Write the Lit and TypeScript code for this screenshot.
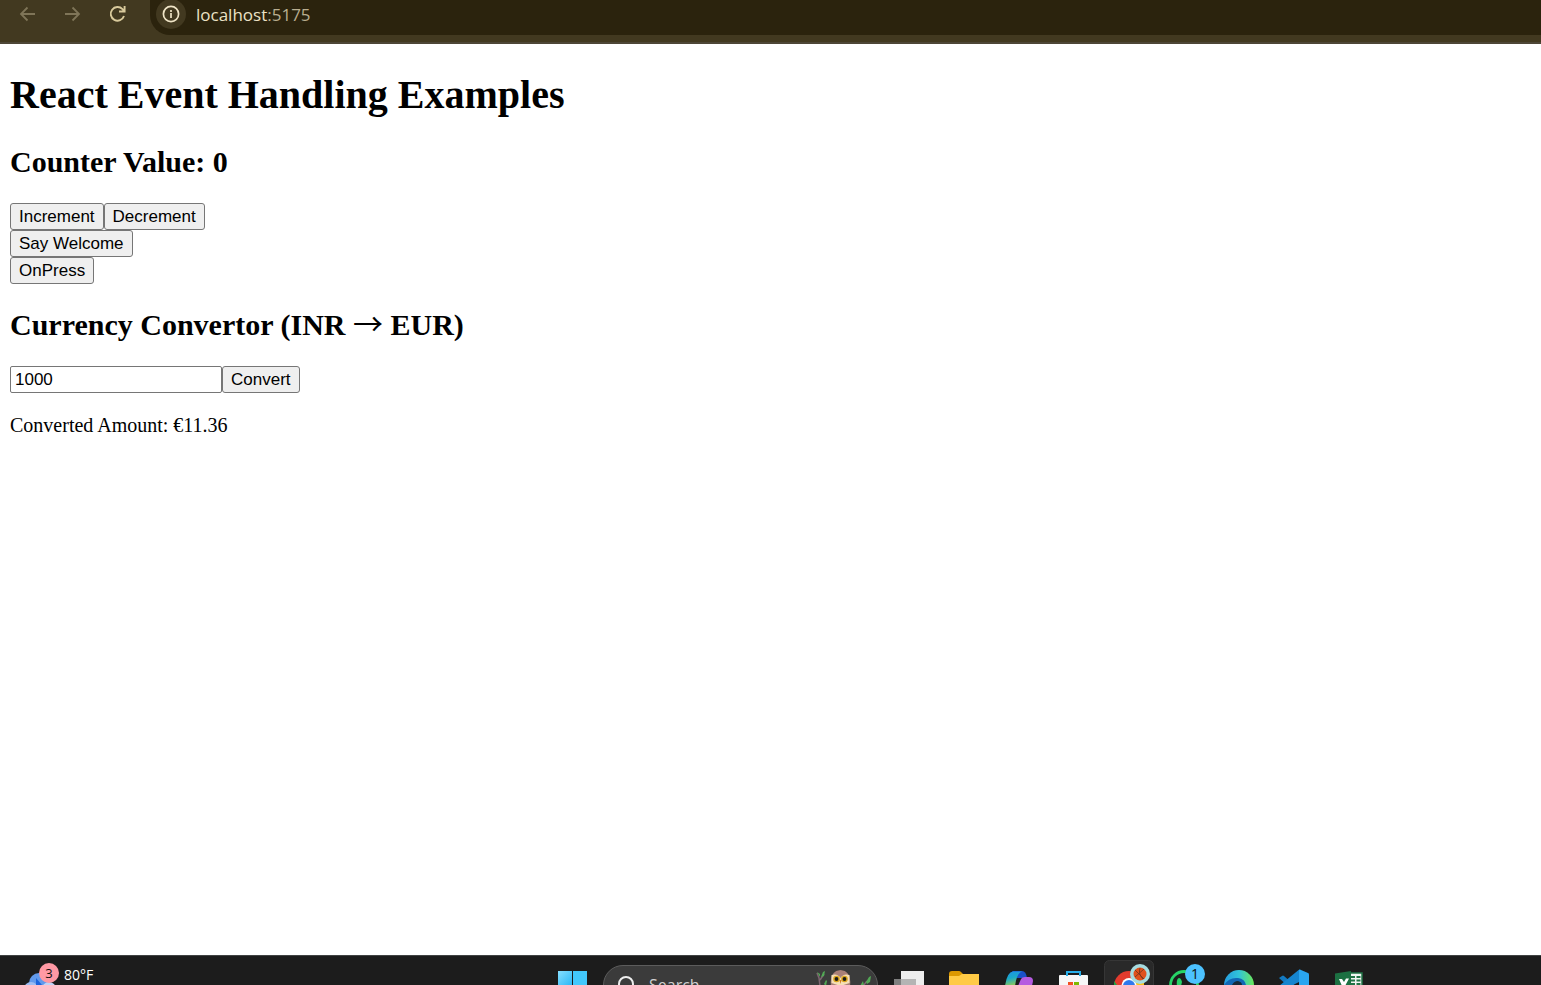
import { LitElement, html, css, svg } from "lit";
import { customElement, state } from "lit/decorators.js";

@customElement("browser-bar")
class BrowserBar extends LitElement {
  static styles = css`
    :host {
      display: flex;
      align-items: flex-start;
      box-sizing: border-box;
      height: 44px;
      background: #423920;
      border-bottom: 2px solid #4d4637;
      overflow: hidden;
    }
    .nav {
      display: flex;
      gap: 17px;
      padding-left: 14px;
    }
    .nav button {
      width: 28px;
      height: 28px;
      padding: 0;
      border: 0;
      background: none;
      color: #d9ca9c;
    }
    .nav button:disabled {
      color: #7f7558;
    }
    svg {
      display: block;
    }
    .address {
      flex: 1;
      display: flex;
      align-items: flex-start;
      gap: 10px;
      box-sizing: border-box;
      height: 35px;
      margin-left: 18px;
      padding-left: 6px;
      background: #2b230d;
      border-radius: 0 0 0 20px;
    }
    .info {
      padding: 0;
      border: 0;
      background: none;
      color: #efe4c6;
    }
    .url {
      font-family: "Open Sans", "Noto Sans", sans-serif;
      font-size: 17px;
      line-height: 29px;
      color: #ece2c5;
      text-decoration: none;
    }
    .port {
      color: #b9ae90;
    }
  `;
  render() {
    return html`
      <nav class="nav">
        <button disabled aria-label="Back">
          <svg width="28" height="28" fill="none" stroke="currentColor" stroke-width="1.8"><path d="M21 14H7M13.500 7.500L7 14l6.500 6.500" /></svg>
        </button>
        <button disabled aria-label="Forward">
          <svg width="28" height="28" fill="none" stroke="currentColor" stroke-width="1.8"><path d="M6 14h14M13.500 7.500L20 14l-6.500 6.500" /></svg>
        </button>
        <button aria-label="Reload">
          <svg width="28" height="28" fill="none" stroke="currentColor" stroke-width="1.9"><path d="M20 16a6.800 6.800 0 1 1-1.500-6.800L20.500 11.300M20.600 6v5.500H15" /></svg>
        </button>
      </nav>
      <div class="address">
        <button class="info" aria-label="Site information">
          <svg width="30" height="33" fill="none" stroke="currentColor" stroke-width="1.7"><circle cx="15" cy="14" r="15" fill="#423920" stroke="none" /><circle cx="15" cy="14" r="7.600" /><path d="M15 13v5M15 10v1.900" /></svg>
        </button>
        <a class="url" href="http://localhost:5175">localhost<span class="port">:5175</span></a>
      </div>
    `;
  }
}

const apps = [
  {
    name: "Task view",
    art: svg`<rect x="19" y="16" width="23" height="20" fill="#ededed"/><rect x="12" y="24" width="22" height="12" fill="#a0a0a0" fill-opacity=".75"/>`,
  },
  {
    name: "File Explorer",
    art: svg`<path d="M12 19q0-3 3-3h7q1 0 2 1l2 2h14q2 0 2 2v10H12z" fill="#dc9800"/><path d="M12 21h10l3-2h17v12H12z" fill="#ffca45"/>`,
  },
  {
    name: "Copilot",
    art: svg`<defs><linearGradient id="cop" x1="0" y1="0" x2=".3" y2="1"><stop offset="0" stop-color="#1f8fe8"/><stop offset=".5" stop-color="#1aa9c8"/><stop offset="1" stop-color="#8cc85a"/></linearGradient></defs>
      <path d="M20 16h10q4 0 5 7H25z" fill="#1951c9"/><path d="M13 31q2-14 8-14.500h9q-4 1-6 9l-1 5.500z" fill="url(#cop)"/><path d="M26 31l3-7q1-2 4-2h4q4 0 4 4l-1 5z" fill="#b55be0"/>`,
  },
  {
    name: "Microsoft Store",
    art: svg`<path d="M12 21q0-1 1-1h27q1 0 1 1v10H12z" fill="#f7f7f7"/><path d="M20 21v-4h13v4" fill="none" stroke="#28afea" stroke-width="2"/><path d="M21 27h5v4h-5z" fill="#f25022"/><path d="M27 27h5v4h-5z" fill="#7fba00"/>`,
  },
  {
    name: "Chrome",
    art: svg`<rect x="2.500" y="5.500" width="49" height="40" rx="5" fill="#292929" stroke="#363636"/>
      <circle cx="27" cy="31" r="15" fill="#e33b2e"/><path d="M12 26l9 12H12z" fill="#1ea446"/><path d="M31 22h11v10H31z" fill="#fbc116"/><circle cx="27" cy="30.500" r="7.500" fill="#fff"/><circle cx="27" cy="31" r="6" fill="#2f79ee"/>
      <circle cx="38" cy="19" r="10" fill="#a6dce0"/><circle cx="38" cy="19" r="6.500" fill="#e0511c"/><path d="M33 15l9 9M42 14l-9 8M38 13q-2 6 3 11" fill="none" stroke="#79371c" stroke-width=".9"/>`,
  },
  {
    name: "WhatsApp",
    art: svg`<circle cx="27" cy="30" r="13.500" fill="#1c1c1c" stroke="#27d366" stroke-width="2.800"/><path d="M20 31q-1-7 2-8 2 0 3 4l-1 4z" fill="#27d366"/><circle cx="38" cy="19" r="10" fill="#4cc2ff"/><text x="38" y="24" text-anchor="middle" font-size="14" fill="#101010">1</text>`,
  },
  {
    name: "Edge",
    art: svg`<defs><linearGradient id="edge"><stop offset="0" stop-color="#249be0"/><stop offset=".5" stop-color="#31c4d8"/><stop offset="1" stop-color="#6ce858"/></linearGradient></defs>
      <circle cx="27" cy="30" r="15" fill="url(#edge)"/><path d="M12 30q5-8 14-7 7 1 8 7z" fill="#1267b5"/><path d="M20 30q2-4 6-4 4 1 4 4z" fill="#182a38"/>`,
  },
  {
    name: "Visual Studio Code",
    art: svg`<path d="M12 23l3-2q1-1 2 0l15 13-2 5z" fill="#1379c0"/><path d="M16 35l-4-4L31 15.500q1-1 2-1v12z" fill="#1685cf"/><path d="M32 15q1-1 2 0l7 3q1 0 1 2v15H32z" fill="#2aa5f0"/>`,
  },
  {
    name: "Excel",
    art: svg`<path d="M26 18h14v13H26z" fill="#f0f5f1" stroke="#217346" stroke-width="1.500"/><path d="M29 21h4v2h-4zM34.500 21h4v2h-4zM29 24.500h4v2h-4zM34.500 24.500h4v2h-4zM29 28h4v2h-4zM34.500 28h4v2h-4z" fill="#217346"/><path d="M13 18.500L29 16v15H13z" fill="#1c7042"/><path d="M17 24h3l2 3 2-3.500h3L23 31h-3z" fill="#fff"/>`,
  },
];

@customElement("task-bar")
class TaskBar extends LitElement {
  static styles = css`
    :host {
      display: flex;
      align-items: flex-start;
      box-sizing: border-box;
      height: 30px;
      background: #1c1c1c;
      overflow: hidden;
      box-shadow: inset 0 1px #404343;
      font-family: "Open Sans", "Noto Sans", sans-serif;
      color: #fff;
    }
    svg {
      display: block;
    }
    button {
      flex: none;
      padding: 0;
      border: 0;
      background: none;
      color: inherit;
      font: inherit;
    }
    .weather {
      display: flex;
      width: 545px;
      text-align: left;
      font-size: 14px;
      line-height: 40px;
    }
    .search {
      display: flex;
      box-sizing: border-box;
      width: 275px;
      height: 40px;
      margin: 10px 4px 0 3px;
      padding-left: 10px;
      border: 1px solid #5c5c5c;
      border-radius: 20px;
      background: #3b3b3b;
    }
    .query {
      flex: 1;
      min-width: 0;
      padding: 0;
      border: 0;
      outline: 0;
      background: none;
      color: #d0d0d0;
      font-family: inherit;
      font-size: 16px;
      line-height: 38px;
    }
    .query::placeholder {
      color: #d0d0d0;
    }
    .glass {
      flex: none;
      width: 35px;
    }
    .owl {
      flex: none;
    }
  `;
  render() {
    return html`
      <button class="weather">
        <svg width="64" height="30">
          <circle cx="39" cy="28" r="10" fill="#6199ec" /><circle cx="31" cy="34" r="7" fill="#9cbcf2" /><circle cx="49" cy="34" r="7" fill="#bfd2f7" /><path d="M36 23l6 7h-6z" fill="#1c63dd" />
          <circle cx="49" cy="18" r="10" fill="#ff99a4" />
          <text x="49" y="23" text-anchor="middle" font-size="13" fill="#111">3</text>
        </svg>
        <span>80°F</span>
      </button>
      <button aria-label="Start">
        <svg width="55" height="30">
          <defs><linearGradient id="win" x2="1" y2="1"><stop offset="0" stop-color="#86dfff" /><stop offset="1" stop-color="#2bb8f6" /></linearGradient></defs>
          <rect x="13" y="16" width="14" height="14" fill="url(#win)" /><rect x="28" y="16" width="14" height="14" fill="#42c8fc" />
        </svg>
      </button>
      <label class="search">
        <svg class="glass" width="35" height="20" fill="none" stroke="#eee" stroke-width="2"><circle cx="12" cy="18" r="7" /></svg>
        <input class="query" placeholder="Search" aria-label="Search" />
        <svg class="owl" width="64" height="20">
          <g fill="none" stroke="#7d6670" stroke-width="1.500"><path d="M4 7l2 5 1 8M11 8L7 14M50 20l4-5" /></g>
          <path d="M4 6l3 2v3zM8 11l2-5 2-1-1 5zM11 18l2-4 1 1-1 5zM47 20l3-5 1 4zM53 16l3-5 2-1-1 6-3 2z" fill="#52a855" />
          <path d="M18 20q-2-15 9.500-16Q39 5 37 20z" fill="#a98078" />
          <path d="M18.500 9q6-2 9 3 3-5 9-3v8l-9 3-9-3z" fill="#f6dfb6" />
          <circle cx="23.500" cy="13" r="3.300" fill="#dba51e" /><circle cx="31.500" cy="13" r="3.300" fill="#dba51e" />
          <circle cx="23.500" cy="13" r="1.900" fill="#1c1b18" /><circle cx="31.500" cy="13" r="1.900" fill="#1c1b18" />
          <path d="M26.500 14h2L27.500 18z" fill="#d07d23" />
        </svg>
      </label>
      ${apps.map(
        (app) => html`<button aria-label=${app.name}><svg width="55" height="30">${app.art}</svg></button>`
      )}
    `;
  }
}

@customElement("app-root")
class AppRoot extends LitElement {
  @state() private count = 0;
  @state() private amount = "1000";
  @state() private converted = "11.36";

  static styles = css`
    :host {
      display: flex;
      flex-direction: column;
      min-height: 100vh;
      background: #fff;
      color: #000;
      font-family: "Liberation Serif", "Times New Roman", serif;
      font-size: 20px;
    }
    main {
      flex: 1;
      padding: 28px 10px;
    }
    h1 {
      margin: 0 0 27px;
      font-size: 40px;
      line-height: 46px;
    }
    h2 {
      margin: 23px 0 24px;
      font-size: 30px;
      line-height: 34px;
    }
    .arrow {
      font-family: "Noto Sans CJK JP", sans-serif;
      font-weight: 400;
      line-height: 1;
    }
    p {
      margin: 20px 0;
      line-height: 24px;
    }
    .row {
      display: flex;
    }
    .row button,
    .row input {
      box-sizing: border-box;
      height: 27px;
      border: 1px solid #767676;
      font-family: "Liberation Sans", Arial, sans-serif;
      font-size: 17px;
      line-height: 20px;
      color: #000;
    }
    .row button {
      padding: 0 8px;
      border-radius: 3px;
      background: #efefef;
    }
    .row input {
      width: 212px;
      padding: 0 4px;
      border-radius: 2px;
      background: #fff;
    }
  `;

  private convert() {
    this.converted = (Number(this.amount) / 88).toFixed(2);
  }

  render() {
    return html`
      <browser-bar></browser-bar>
      <main>
        <h1>React Event Handling Examples</h1>
        <h2>Counter Value: ${this.count}</h2>
        <div class="row">
          <button @click=${() => this.count++}>Increment</button>
          <button @click=${() => this.count--}>Decrement</button>
        </div>
        <div class="row"><button>Say Welcome</button></div>
        <div class="row"><button>OnPress</button></div>
        <h2>Currency Convertor (INR <span class="arrow">→</span> EUR)</h2>
        <div class="row">
          <input
            type="text"
            aria-label="Amount in INR"
            .value=${this.amount}
            @input=${(e: Event) => (this.amount = (e.target as HTMLInputElement).value)}
          />
          <button @click=${this.convert}>Convert</button>
        </div>
        <p>Converted Amount: €${this.converted}</p>
      </main>
      <task-bar></task-bar>
    `;
  }
}
